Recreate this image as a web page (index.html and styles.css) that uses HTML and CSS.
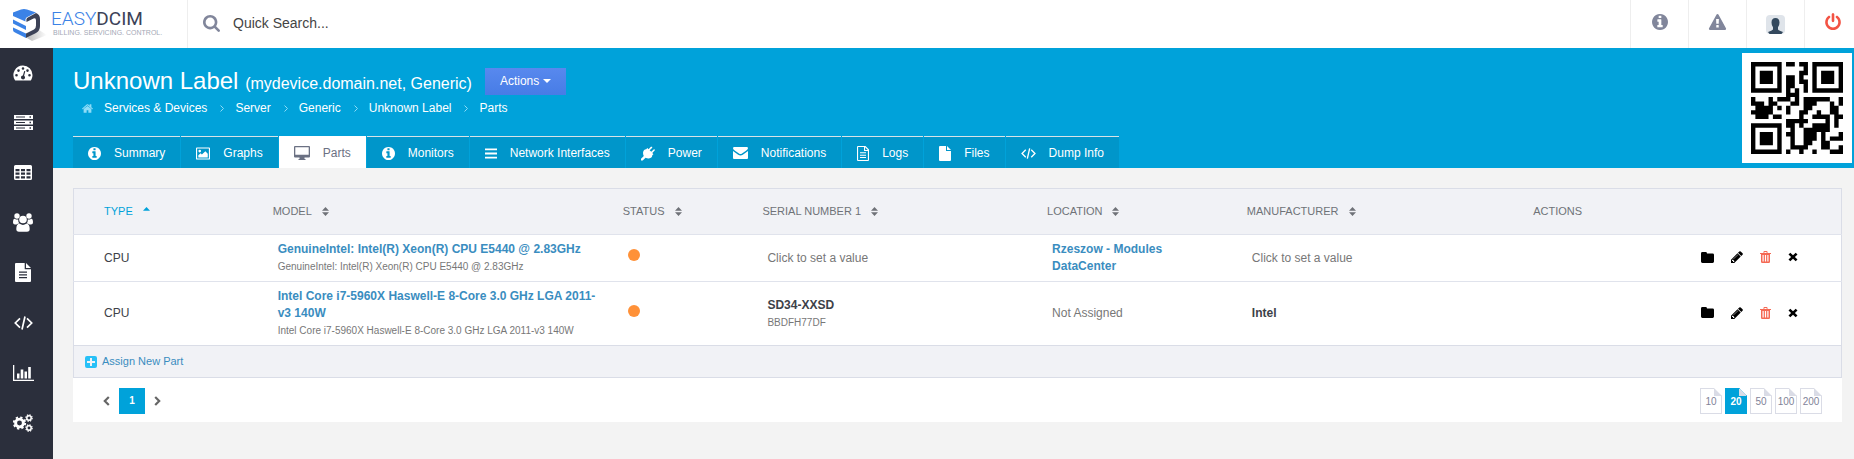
FILE: index.html
```html
<!DOCTYPE html>
<html lang="en">
<head>
<meta charset="utf-8">
<meta name="viewport" content="width=device-width, initial-scale=1">
<title>Unknown Label - Parts</title>
<link rel="stylesheet" href="styles.css">
</head>
<body>
<svg class="sprite" aria-hidden="true">
  <symbol id="i-info" viewBox="128 128 1536 1536"><path d="M1152 1376v-160q0-14-9-23t-23-9h-96v-512q0-14-9-23t-23-9h-320q-14 0-23 9t-9 23v160q0 14 9 23t23 9h96v320h-96q-14 0-23 9t-9 23v160q0 14 9 23t23 9h448q14 0 23-9t9-23zm-128-896v-160q0-14-9-23t-23-9h-192q-14 0-23 9t-9 23v160q0 14 9 23t23 9h192q14 0 23-9t9-23zm640 416q0 209-103 385.5t-279.5 279.5-385.5 103-385.5-103-279.5-279.5-103-385.5 103-385.5 279.5-279.5 385.5-103 385.5 103 279.5 279.5 103 385.5z"/></symbol>
  <symbol id="i-warn" viewBox="0 0 1792 1664"><path d="M1024 1375v-190q0-14-9.5-23.5t-22.5-9.5h-192q-13 0-22.5 9.5t-9.5 23.5v190q0 14 9.5 23.5t22.5 9.5h192q13 0 22.5-9.5t9.5-23.5zm-2-374l18-459q0-12-10-19-13-11-24-11h-220q-11 0-24 11-10 7-10 21l17 457q0 10 10 16.5t24 6.5h185q14 0 23.5-6.5t10.5-16.5zm-14-934l768 1408q35 63-2 126-17 29-46.5 46t-63.5 17h-1536q-34 0-63.5-17t-46.5-46q-37-63-2-126l768-1408q17-31 47-49t65-18 65 18 47 49z"/></symbol>
  <symbol id="i-search" viewBox="64 128 1664 1664"><path d="M1216 832q0-185-131.5-316.5t-316.5-131.5-316.5 131.5-131.5 316.5 131.5 316.5 316.5 131.5 316.5-131.5 131.5-316.5zm512 832q0 52-38 90t-90 38q-54 0-90-38l-343-342q-179 124-399 124-143 0-273.5-55.5t-225-150-150-225-55.5-273.5 55.5-273.5 150-225 225-150 273.5-55.5 273.5 55.5 225 150 150 225 55.5 273.5q0 220-124 399l343 343q37 37 37 90z"/></symbol>
  <symbol id="i-power" viewBox="128 0 1536 1664"><path d="M1664 896q0 156-61 298t-164 245-245 164-298 61-298-61-245-164-164-245-61-298q0-182 80.5-343t226.5-270q43-32 95.5-25t83.5 50q32 42 24.5 94.5t-49.5 84.5q-98 74-151.5 181t-53.5 228q0 104 40.5 198.5t109.5 163.5 163.5 109.5 198.5 40.5 198.5-40.5 163.5-109.5 109.5-163.5 40.5-198.5q0-121-53.5-228t-151.5-181q-42-32-49.5-84.5t24.5-94.5q31-43 84-50t95 25q146 109 226.5 270t80.5 343zm-640-768v640q0 52-38 90t-90 38-90-38-38-90v-640q0-52 38-90t90-38 90 38 38 90z"/></symbol>
  <symbol id="i-home" viewBox="80 240 1632 1312"><path d="M1472 992v480q0 26-19 45t-45 19h-384v-384h-256v384h-384q-26 0-45-19t-19-45v-480q0-1 .5-3t.5-3l575-474 575 474q1 2 1 6zm223-69l-62 74q-8 9-21 11h-3q-13 0-21-7l-692-577-692 577q-12 8-24 7-13-2-21-11l-62-74q-8-10-7-23.5t11-21.5l719-599q32-26 76-26t76 26l244 204v-195q0-14 9-23t23-9h192q14 0 23 9t9 23v408l219 182q10 8 11 21.5t-7 23.5z"/></symbol>
  <symbol id="i-pencil" viewBox="128 128 1536 1536"><path d="M491 1536l91-91-235-235-91 91v107h128v128h107zm523-928q0-22-22-22-10 0-17 7l-542 542q-7 7-7 17 0 22 22 22 10 0 17-7l542-542q7-7 7-17zm-54-192l416 416-832 832h-416v-416zm683 96q0 53-37 90l-166 166-416-416 166-165q36-38 90-38 53 0 91 38l235 234q37 39 37 91z"/></symbol>
  <symbol id="i-gauge" viewBox="0 0 20 16"><path fill-rule="evenodd" d="M10 0.5a9.5 9.5 0 0 1 9.500 9.500c0 2-.6 3.700-1.500 5.200q-.3.4-.8.400H2.800q-.5 0-.8-.4A9.500 9.500 0 0 1 10 .5zM3.500 8.900a1.300 1.300 0 1 0 0 2.600 1.300 1.300 0 0 0 0-2.600zM5.500 4.300a1.300 1.300 0 1 0 0 2.600 1.300 1.300 0 0 0 0-2.600zM10 2.200a1.300 1.300 0 1 0 0 2.600 1.300 1.300 0 0 0 0-2.600zM14.500 4.300a1.300 1.300 0 1 0 0 2.600 1.300 1.300 0 0 0 0-2.600zM16.500 8.900a1.300 1.300 0 1 0 0 2.600 1.300 1.300 0 0 0 0-2.600zM11.200 5.900l-1.300 4.500a2 2 0 1 0 1.200.3l1.200-4.500z"/></symbol>
  <symbol id="i-server" viewBox="0 0 19 15"><path fill-rule="evenodd" d="M0 0h19v4H0zM2 1.500v1h9v-1zM15.500 1.300v1.400H17V1.300zM0 5.500h19v4H0zM2 7v1h9V7zM15.500 6.800v1.400H17V6.800zM0 11h19v4H0zM2 12.500v1h9v-1zM15.500 12.300v1.400H17v-1.400z"/></symbol>
  <symbol id="i-table" viewBox="0 0 18 15"><path fill-rule="evenodd" d="M1.500 0h15Q18 0 18 1.500v12q0 1.500-1.500 1.500h-15Q0 15 0 13.500v-12Q0 0 1.500 0zM1.500 4v2.300h4V4zM7 4v2.300h4V4zM12.500 4v2.300h4V4zM1.500 7.500v2.300h4V7.500zM7 7.500v2.300h4V7.500zM12.500 7.500v2.300h4V7.500zM1.500 11.200v2.300h4v-2.300zM7 11.200v2.300h4v-2.300zM12.500 11.200v2.300h4v-2.300z"/></symbol>
  <symbol id="i-users" viewBox="0 0 20 19"><circle cx="4" cy="3" r="2.700"/><circle cx="16" cy="3" r="2.700"/><circle cx="10" cy="6.500" r="3.800"/><path d="M5.200 6.400Q5 9 6.500 10.500 5 10.400 3.500 11.500H2Q0 11.500 0 9.500 0 5.700 1.600 5.700 4 7 5.200 6.400zM14.800 6.400Q15 9 13.500 10.500q1.500-.1 3 1H18q2 0 2-2 0-3.800-1.600-3.800Q16 7 14.800 6.400zM6.700 10.800Q10 13 13.300 10.800q3.400 0 3.400 5.200 0 2.800-2.700 2.800H6q-2.700 0-2.700-2.800 0-5.200 3.400-5.200z"/></symbol>
  <symbol id="i-doc" viewBox="0 0 16 19"><path fill-rule="evenodd" d="M1 0h8.700v6.300H16V18q0 1-1 1H1q-1 0-1-1V1q0-1 1-1zM11 0l5 5h-5zM4 8.500v1.200h8V8.500zM4 11.300v1.200h8v-1.200zM4 14v1.200h8V14z"/></symbol>
  <symbol id="i-code" viewBox="0 0 19 14"><path fill="none" stroke="currentColor" stroke-width="1.700" d="M6 2.300L1.300 7 6 11.700M13 2.300L17.700 7 13 11.700M11 .5L8 13.500"/></symbol>
  <symbol id="i-chart" viewBox="0 0 21 16"><path d="M0 0h1.300v14.700H21V16H0zM4 8.500h2.500v5H4zM7.700 4.500h2.600v9H7.700zM11.500 6.500H14v7h-2.500zM15.200 2h2.600v11.500h-2.600z"/></symbol>
  <symbol id="i-cogs" viewBox="0 0 20 18"><g fill="none" stroke="currentColor"><circle cx="6.500" cy="9" r="3.900" stroke-width="2.900"/><circle cx="6.500" cy="9" r="5.700" stroke-width="1.900" stroke-dasharray="2.300 2.180"/><circle cx="16" cy="4" r="2.200" stroke-width="1.500"/><circle cx="16" cy="4" r="3.200" stroke-width="1.200" stroke-dasharray="1.400 1.110"/><circle cx="16" cy="14" r="2.200" stroke-width="1.500"/><circle cx="16" cy="14" r="3.200" stroke-width="1.200" stroke-dasharray="1.400 1.110"/></g></symbol>
  <symbol id="i-image" viewBox="0 0 15 13"><path fill-rule="evenodd" d="M1 0h13q1 0 1 1v11q0 1-1 1H1q-1 0-1-1V1q0-1 1-1zM1.200 1.200v10.600h12.600V1.200zM2.500 10.700V8.500L5 6.200l1.300 1.300L10 4l2.600 2.800v3.900zM4 2.500a1.400 1.400 0 1 1 0 2.800 1.400 1.400 0 0 1 0-2.800z"/></symbol>
  <symbol id="i-screen" viewBox="0 0 16 14"><path fill-rule="evenodd" d="M1 0h14q1 0 1 1v9.500q0 1-1 1h-4.500V13h1v1h-7v-1h1v-1.500H1q-1 0-1-1V1q0-1 1-1zM1.300 1.300v7.500h13.400V1.300z"/></symbol>
  <symbol id="i-bars" viewBox="0 0 13 11"><path d="M0 0h13v2H0zM0 4.500h13v2H0zM0 9h13v2H0z"/></symbol>
  <symbol id="i-plug" viewBox="0 0 15 15"><path d="M14.600 4.400q.6-.6 0-1.100t-1.100 0L11 5.700 9.300 4l2.500-2.500q.6-.6 0-1.100t-1.200 0L8.100 2.900 6.800 1.700 5.600 2.900Q2.500 3 2.200 6.500q-.1 2.200.8 3.600L0 13.200V15h1.800l3.100-3q1.500.9 3.600.8 3.400-.3 3.600-3.400l1.200-1.200-1.200-1.300z"/></symbol>
  <symbol id="i-mail" viewBox="0 0 15 12"><path d="M0 1.200Q0 0 1.200 0h12.600Q15 0 15 1.200 14.800 2.600 13 3.800L9 6.600q-1.500 1-3 0L2 3.800Q0 2.400 0 1.200zM0 4l5.200 3.700q2.300 1.500 4.600 0L15 4v7q0 1-1 1H1q-1 0-1-1z"/></symbol>
  <symbol id="i-docline" viewBox="0 0 12 15"><path fill-rule="evenodd" d="M1 0h7.500L12 3.500V14q0 1-1 1H1q-1 0-1-1V1q0-1 1-1zM1.100 1.100v12.800h9.800V5H7V1.100zM8.100 1.300V3.900h2.600zM3 6.300h6v1H3zM3 8.700h6v1H3zM3 11.100h6v1H3z"/></symbol>
  <symbol id="i-file" viewBox="0 0 12 15"><path d="M1 0h6v5h5v9q0 1-1 1H1q-1 0-1-1V1q0-1 1-1zM8 0l4 4H8z"/></symbol>
  <symbol id="i-sort" viewBox="0 0 7 9"><path d="M0 3.800L3.500 0 7 3.800zM0 5.200h7L3.500 9z"/></symbol>
  <symbol id="i-sortup" viewBox="0 0 7 9"><path d="M0 3.800L3.500 0 7 3.800z"/></symbol>
  <symbol id="i-folder" viewBox="0 0 13 11"><path d="M1.400 0h3.200Q6 0 6 1.400h5.600q1.400 0 1.400 1.400v6.800Q13 11 11.600 11H1.400Q0 11 0 9.600V1.400Q0 0 1.400 0z"/></symbol>
  <symbol id="i-trash" viewBox="0 0 11 12"><path fill-rule="evenodd" d="M3.500 2V.9Q3.500 0 4.400 0h2.200q.9 0 .9.900V2H11v1h-1v7.800q0 1.200-1.200 1.200H2.200Q1 12 1 10.800V3H0V2zM4.400.9V2h2.200V.9zM2.500 4v6.500h1.200V4zM4.900 4v6.500h1.200V4zM7.300 4v6.500h1.200V4z"/></symbol>
  <symbol id="i-times" viewBox="0 0 10 10"><path d="M2.300.7L5 3.300 7.700.7 9.500 2.500 6.900 5l2.600 2.500-1.800 1.800L5 6.700 2.300 9.300.5 7.500 3.100 5 .5 2.500z"/></symbol>
  <symbol id="i-plus" viewBox="0 0 12 12"><path fill-rule="evenodd" d="M2 0h8q2 0 2 2v8q0 2-2 2H2q-2 0-2-2V2q0-2 2-2zM5 2v3H2v2h3v3h2V7h3V5H7V2z"/></symbol>
  <symbol id="i-chev" viewBox="0 0 4 7"><path fill="none" stroke="currentColor" stroke-width="1" d="M.5.500l3 3-3 3"/></symbol>
  <symbol id="i-next" viewBox="0 0 7 10"><path fill="none" stroke="currentColor" stroke-width="2.200" d="M1.200 1L5.200 5l-4 4"/></symbol>
  <symbol id="i-prev" viewBox="0 0 7 10"><path fill="none" stroke="currentColor" stroke-width="2.200" d="M5.800 1L1.800 5l4 4"/></symbol>
</svg>

<header class="topbar">
  <a class="brand" href="#" aria-label="EasyDCIM home">
    <svg class="brand-mark" viewBox="0 0 34 34" width="34" height="34" aria-hidden="true">
      <defs><linearGradient id="shade" x1="0" x2="1"><stop offset="0" stop-color="#bbb"/><stop offset="1" stop-color="#fff"/></linearGradient></defs>
      <path fill="url(#shade)" d="M14 30l12-8 8 5-15 6z"/>
      <path fill="#3b82e6" d="M0 4.500L8 1.500q3-1 6 0L23 4.500 13.500 9.500q-1.500 1-1 4L0 8zM0 11.500l13 6.500v4L0 15.500zM0 19.500l13 6V30L2 24.500Q0 23.500 0 22z"/>
      <path fill="#3c4257" d="M14 10l9-5q4 1.500 4 6v7q0 5-4 7l-10 5v-4.500l8-4q2-1.200 2-4V12.500q0-3-2.500-2L13.500 14q-.5-3 .5-4z"/>
    </svg>
    <span class="brand-text">
      <span class="brand-name">EASY<b>DCIM</b></span>
      <span class="brand-tag">BILLING. SERVICING. CONTROL.</span>
    </span>
  </a>
  <label class="search">
    <svg class="ic" width="17" height="17" role="img" aria-label="Search"><use href="#i-search"/></svg>
    <input type="text" placeholder="Quick Search...">
  </label>
  <nav class="tools" aria-label="Account">
    <a href="#" aria-label="Information"><svg class="ic" width="16" height="16"><use href="#i-info"/></svg></a>
    <a href="#" aria-label="Alerts"><svg class="ic" width="19" height="16"><use href="#i-warn"/></svg></a>
    <a class="avatar" href="#" aria-label="Profile"><svg viewBox="0 0 19 19" width="19" height="19"><rect width="19" height="19" rx="4" fill="#dfe4ea"/><path fill="#34495e" d="M9.500 3q4 0 4 4.500 0 3-1.500 4.700v2.300q1 1.200 5 2.500l-1.500 2H3.500L2 17q4-1.300 5-2.500v-2.300Q5.500 10.500 5.500 7.500 5.500 3 9.500 3z"/></svg></a>
    <a class="logout" href="#" aria-label="Log out"><svg class="ic" width="16" height="17"><use href="#i-power"/></svg></a>
  </nav>
</header>

<div class="shell">
  <nav class="side" aria-label="Main">
    <a href="#" aria-label="Dashboard"><svg width="20" height="16"><use href="#i-gauge"/></svg></a>
    <a href="#" aria-label="Devices"><svg width="19" height="15"><use href="#i-server"/></svg></a>
    <a href="#" aria-label="Racks"><svg width="18" height="15"><use href="#i-table"/></svg></a>
    <a href="#" aria-label="Users"><svg width="20" height="19"><use href="#i-users"/></svg></a>
    <a href="#" aria-label="Documents"><svg width="16" height="19"><use href="#i-doc"/></svg></a>
    <a href="#" aria-label="Developer"><svg width="19" height="14"><use href="#i-code"/></svg></a>
    <a href="#" aria-label="Reports"><svg width="21" height="16"><use href="#i-chart"/></svg></a>
    <a href="#" aria-label="Settings"><svg width="20" height="18"><use href="#i-cogs"/></svg></a>
  </nav>

  <main class="main">
    <section class="hero">
      <div class="hero-info">
        <div class="title-row">
          <h1>Unknown Label <small>(mydevice.domain.net, Generic)</small></h1>
          <button class="actions" type="button">Actions<span class="caret"></span></button>
        </div>
        <ol class="crumbs">
          <li><svg class="home" width="11" height="9"><use href="#i-home"/></svg><a href="#">Services &amp; Devices</a></li>
          <li><svg width="4" height="7"><use href="#i-chev"/></svg><a href="#">Server</a></li>
          <li><svg width="4" height="7"><use href="#i-chev"/></svg><a href="#">Generic</a></li>
          <li><svg width="4" height="7"><use href="#i-chev"/></svg><a href="#">Unknown Label</a></li>
          <li><svg width="4" height="7"><use href="#i-chev"/></svg><a href="#">Parts</a></li>
        </ol>
        <nav class="tabs" aria-label="Device">
          <a href="#"><svg width="13" height="13"><use href="#i-info"/></svg>Summary</a>
          <a href="#"><svg width="14" height="13"><use href="#i-image"/></svg>Graphs</a>
          <a class="on" href="#" aria-current="page"><svg width="16" height="14"><use href="#i-screen"/></svg>Parts</a>
          <a href="#"><svg width="13" height="13"><use href="#i-info"/></svg>Monitors</a>
          <a href="#"><svg width="12" height="11"><use href="#i-bars"/></svg>Network Interfaces</a>
          <a href="#"><svg width="14" height="15"><use href="#i-plug"/></svg>Power</a>
          <a href="#"><svg width="15" height="12"><use href="#i-mail"/></svg>Notifications</a>
          <a href="#"><svg width="12" height="15"><use href="#i-docline"/></svg>Logs</a>
          <a href="#"><svg width="12" height="15"><use href="#i-file"/></svg>Files</a>
          <a href="#"><svg width="15" height="11"><use href="#i-code"/></svg>Dump Info</a>
        </nav>
      </div>
      <svg class="qr" viewBox="0 0 21 21" role="img" aria-label="QR code">
        <path fill="none" stroke="#000" stroke-width="1" d="M.5.5h6v6h-6zM14.500.5h6v6h-6zM.5 14.500h6v6h-6z"/>
        <path d="M2 2h3v3h-3zM16 2h3v3h-3zM2 16h3v3h-3z"/>
        <path fill="none" stroke="#000" stroke-width="1" d="M8 .5h2M11 .5h2M12 1.500h1M11 2.500h2M8 3.500h2M11 3.500h1M8 4.500h2M11 4.500h2M8 5.500h2M12 5.500h1M8 6.500h1M10 6.500h1M12 6.500h1M8 7.500h3M0 8.500h1M4 8.500h1M6 8.500h3M10 8.500h1M12 8.500h6M20 8.500h1M0 9.500h3M4 9.500h2M9 9.500h2M12 9.500h3M18 9.500h1M20 9.500h1M1 10.500h4M6 10.500h1M8 10.500h1M12 10.500h2M18 10.500h2M0 11.500h5M8 11.500h1M11 11.500h2M15 11.500h1M18 11.500h2M1 12.500h3M5 12.500h2M11 12.500h1M14 12.500h4M19 12.500h2M8 13.500h5M17 13.500h1M19 13.500h1M8 14.500h2M11 14.500h1M14 14.500h4M19 14.500h1M9 15.500h1M12 15.500h6M8 16.500h2M12 16.500h3M16 16.500h1M20 16.500h1M9 17.500h1M12 17.500h3M16 17.500h1M18 17.500h3M9 18.500h1M12 18.500h2M16 18.500h2M9 19.500h4M16 19.500h2M20 19.500h1M8 20.500h1M11 20.500h1M14 20.500h1M18 20.500h3"/>
      </svg>
    </section>

    <section class="panel">
      <table class="parts">
        <colgroup><col class="c-type"><col class="c-model"><col class="c-status"><col class="c-serial"><col class="c-location"><col class="c-maker"><col class="c-actions"></colgroup>
        <thead>
          <tr>
            <th scope="col" aria-sort="ascending"><a class="sorted" href="#">TYPE<svg width="7" height="9"><use href="#i-sortup"/></svg></a></th>
            <th scope="col"><a href="#">MODEL<svg width="7" height="9"><use href="#i-sort"/></svg></a></th>
            <th scope="col"><a href="#">STATUS<svg width="7" height="9"><use href="#i-sort"/></svg></a></th>
            <th scope="col"><a href="#">SERIAL NUMBER 1<svg width="7" height="9"><use href="#i-sort"/></svg></a></th>
            <th scope="col"><a href="#">LOCATION<svg width="7" height="9"><use href="#i-sort"/></svg></a></th>
            <th scope="col"><a href="#">MANUFACTURER<svg width="7" height="9"><use href="#i-sort"/></svg></a></th>
            <th scope="col">ACTIONS</th>
          </tr>
        </thead>
        <tbody>
          <tr>
            <td>CPU</td>
            <td><a class="name" href="#">GenuineIntel: Intel(R) Xeon(R) CPU E5440 @ 2.83GHz</a><span class="sub">GenuineIntel: Intel(R) Xeon(R) CPU E5440 @ 2.83GHz</span></td>
            <td><span class="dot" role="img" aria-label="Warning"></span></td>
            <td><a class="soft" href="#">Click to set a value</a></td>
            <td><a class="name" href="#">Rzeszow - Modules DataCenter</a></td>
            <td><a class="soft" href="#">Click to set a value</a></td>
            <td>
              <div class="ops">
                <button type="button" aria-label="Open"><svg width="13" height="11"><use href="#i-folder"/></svg></button>
                <button type="button" aria-label="Edit"><svg width="12" height="12"><use href="#i-pencil"/></svg></button>
                <button class="del" type="button" aria-label="Delete"><svg width="11" height="12"><use href="#i-trash"/></svg></button>
                <button type="button" aria-label="Unassign"><svg width="10" height="10"><use href="#i-times"/></svg></button>
              </div>
            </td>
          </tr>
          <tr>
            <td>CPU</td>
            <td><a class="name" href="#">Intel Core i7-5960X Haswell-E 8-Core 3.0 GHz LGA 2011-v3 140W</a><span class="sub">Intel Core i7-5960X Haswell-E 8-Core 3.0 GHz LGA 2011-v3 140W</span></td>
            <td><span class="dot" role="img" aria-label="Warning"></span></td>
            <td><b>SD34-XXSD</b><span class="sub">BBDFH77DF</span></td>
            <td><span class="soft">Not Assigned</span></td>
            <td><b>Intel</b></td>
            <td>
              <div class="ops">
                <button type="button" aria-label="Open"><svg width="13" height="11"><use href="#i-folder"/></svg></button>
                <button type="button" aria-label="Edit"><svg width="12" height="12"><use href="#i-pencil"/></svg></button>
                <button class="del" type="button" aria-label="Delete"><svg width="11" height="12"><use href="#i-trash"/></svg></button>
                <button type="button" aria-label="Unassign"><svg width="10" height="10"><use href="#i-times"/></svg></button>
              </div>
            </td>
          </tr>
        </tbody>
      </table>
      <div class="assign"><a href="#"><svg width="12" height="12"><use href="#i-plus"/></svg>Assign New Part</a></div>
      <div class="pager">
        <nav class="pages" aria-label="Pages">
          <a href="#" aria-label="Previous"><svg width="7" height="10"><use href="#i-prev"/></svg></a>
          <a class="cur" href="#" aria-current="page">1</a>
          <a href="#" aria-label="Next"><svg width="7" height="10"><use href="#i-next"/></svg></a>
        </nav>
        <nav class="sizes" aria-label="Rows per page">
          <a href="#">10</a><a class="cur" href="#">20</a><a href="#">50</a><a href="#">100</a><a href="#">200</a>
        </nav>
      </div>
    </section>
  </main>
</div>
</body>
</html>
```

FILE: styles.css
```css
* { box-sizing: border-box; }
body {
  margin: 0;
  min-height: 100vh;
  display: flex;
  flex-direction: column;
  background: #f3f3f3;
  color: #3d4148;
  font: 12px/17px "Liberation Sans", Arial, sans-serif;
}
a { color: inherit; text-decoration: none; }
svg { fill: currentColor; display: block; flex: none; }
button { font: inherit; color: inherit; border: 0; padding: 0; background: none; }
.sprite { position: absolute; width: 0; height: 0; }

/* Top bar */
.topbar { display: flex; height: 48px; background: #fff; }
.brand {
  width: 188px;
  padding: 8px 0 0 13px;
  display: flex;
  gap: 4px;
  border-right: 1px solid #eee;
}
.brand-text { display: flex; flex-direction: column; }
.brand-name { font: 300 19px/21px Roboto, sans-serif; color: #3b82e6; }
.brand-name b { font-weight: 400; color: #3c4257; }
.brand-tag { padding-left: 2px; font-size: 7px; line-height: 8px; color: #a4a8b6; }
.search { flex: 1; display: flex; align-items: center; gap: 13px; padding: 0 15px 2px; }
.ic { color: #81869b; }
.search input {
  flex: 1;
  border: 0;
  padding: 0;
  outline: 0;
  background: none;
  font: 14px/20px "Liberation Sans", Arial, sans-serif;
  color: #444;
}
.search input::placeholder { color: #444; opacity: 1; }
.tools { display: flex; }
.tools a {
  width: 58px;
  height: 48px;
  padding-bottom: 5px;
  display: flex;
  align-items: center;
  justify-content: center;
  border-left: 1px solid #eee;
}
.tools .avatar { padding-bottom: 0; }
.tools .logout { width: 50px; padding-left: 20px; justify-content: flex-start; }
.logout .ic { color: #f35344; }

/* Side navigation */
.shell { flex: 1; display: flex; }
.side { width: 53px; background: #2b2f3c; color: #fff; flex: none; }
.side a {
  height: 50px;
  padding: 0 7px 1px 0;
  display: flex;
  align-items: center;
  justify-content: center;
}
.main { flex: 1; min-width: 0; }

/* Device heading */
.hero {
  display: flex;
  justify-content: space-between;
  background: #00a2da;
  color: #fff;
}
.hero-info { padding: 18px 0 0 20px; }
.title-row { display: flex; gap: 13px; height: 34px; }
h1 { margin: 0; font-size: 24px; line-height: 30px; font-weight: 400; }
h1 small { font-size: 16px; }
.actions {
  display: flex;
  align-items: center;
  gap: 4px;
  width: 81px;
  height: 27px;
  margin-top: 2px;
  padding: 0 0 1px 15px;
  background: linear-gradient(#5889ee, #477ce6);
}
.caret { border: 4px solid transparent; border-top-color: #fff; border-bottom: 0; }
.crumbs { list-style: none; margin: 0; padding: 0 0 0 9px; display: flex; }
.crumbs li { display: flex; align-items: center; gap: 11px; padding-right: 13px; color: #8edcf7; }
.crumbs li a { color: #fff; }
.tabs { display: flex; gap: 1px; padding-top: 19px; }
.tabs a {
  display: flex;
  align-items: center;
  gap: 13px;
  height: 32px;
  padding: 1px 15px 0;
  border-top: 1px solid #d7e3e8;
  background: #0096ca;
}
.tabs .on { background: #fff; border-color: #fff; color: #6b7183; }
.qr { width: 110px; height: 110px; margin: 5px 2px 5px 0; padding: 9px; background: #fff; fill: #000; }

/* Parts table */
.panel { margin: 20px 12px 0 20px; background: #fff; }
.parts {
  width: 100%;
  table-layout: fixed;
  border-collapse: collapse;
  border: 1px solid #dadde7;
}
.c-type { width: 10.7%; }
.c-model { width: 19.8%; }
.c-status { width: 7.9%; }
.c-serial { width: 16.1%; }
.c-location { width: 11.3%; }
.c-maker { width: 16.2%; }
th {
  height: 46px;
  padding: 0 10px;
  text-align: left;
  font-size: 11px;
  font-weight: 400;
  color: #6f7278;
  background: #f1f2f6;
}
th a { display: flex; align-items: center; gap: 10px; }
th .sorted { color: #00a2da; }
td { padding: 6px 15px; border-top: 1px solid #e0e3ec; }
th:first-child, td:first-child { padding-left: 30px; }
.name { display: block; font-weight: 700; color: #3a8dc0; }
.sub { display: block; font-size: 10px; color: #777; }
.soft { color: #777; }
.dot { display: block; width: 12px; height: 12px; margin-bottom: 6px; border-radius: 50%; background: #ff9138; }
.ops { display: flex; align-items: center; justify-content: flex-end; gap: 17px; padding: 0 28px 2px 0; color: #000; }
.ops .del { color: #f56954; }
.assign {
  display: flex;
  align-items: center;
  height: 32px;
  padding-left: 11px;
  border: 1px solid #dadde7;
  border-top: 0;
  background: #f1f2f6;
  font-size: 11px;
  color: #3a8dc0;
}
.assign a { display: flex; align-items: center; gap: 5px; }
.assign svg { color: #27c0f7; }

/* Paging */
.pager { display: flex; justify-content: space-between; padding: 10px 20px 8px 30px; }
.pages, .sizes { display: flex; align-items: center; font-size: 10px; }
.pages { gap: 9px; color: #666; }
.pages .cur { width: 26px; line-height: 26px; text-align: center; font-weight: 700; color: #fff; background: #00a2da; }
.sizes { gap: 3px; }
.sizes a {
  width: 22px;
  height: 26px;
  line-height: 25px;
  white-space: nowrap;
  display: flex;
  justify-content: center;
  color: #7f8398;
  border: 1px solid #dadce6;
  background: linear-gradient(#dadce6, #dadce6) top right / 8px 8px no-repeat border-box;
  clip-path: polygon(0 0, 14px 0, 100% 8px, 100% 100%, 0 100%);
}
.sizes .cur {
  font-weight: 700;
  color: #fff;
  border-color: #00a2da;
  background-color: #00a2da;
}
```
